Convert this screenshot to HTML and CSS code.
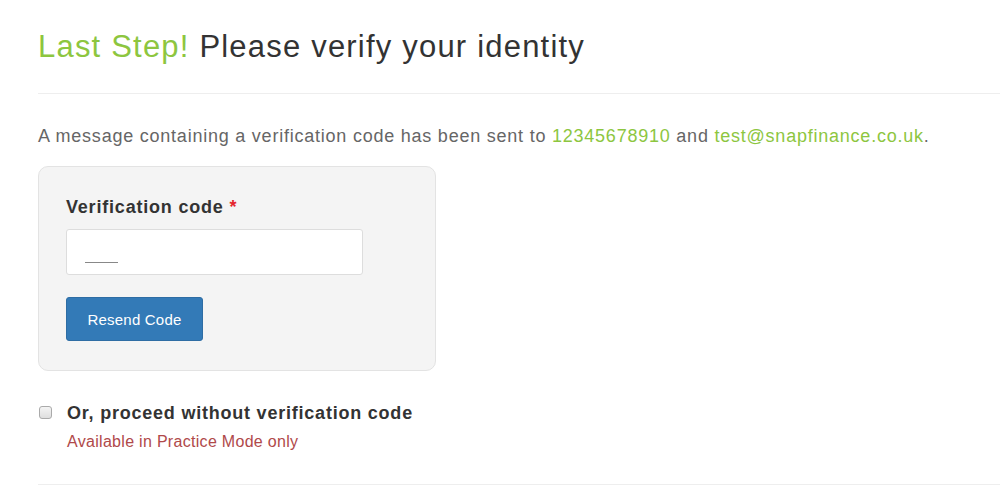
FILE: index.html
```html
<!DOCTYPE html>
<html>
<head>
<meta charset="utf-8">
<link rel="stylesheet" href="styles.css">
</head>
<body>
<div class="page">
  <h1 class="title"><span class="green">Last Step!</span> Please verify your identity</h1>
  <hr class="rule">
  <p class="lead">A message containing a verification code has been sent to <span class="green">12345678910</span> and <span class="green">test@snapfinance.co.uk</span>.</p>
  <div class="well">
    <label class="label">Verification code <span class="req">*</span></label>
    <div class="input"><span class="placeholder"></span></div>
    <button class="btn">Resend Code</button>
  </div>
  <div class="check-row">
    <span class="checkbox"></span>
    <div class="check-text">
      <div class="check-label">Or, proceed without verification code</div>
      <div class="note">Available in Practice Mode only</div>
    </div>
  </div>
  <hr class="rule bottom">
</div>
</body>
</html>
```
FILE: styles.css
```css
html, body {
  margin: 0;
  padding: 0;
  background: #fff;
}
body {
  font-family: "Liberation Sans", Arial, sans-serif;
  color: #333;
}
.page {
  padding: 28px 0 0 38px;
}
.title {
  margin: 0;
  font-size: 31px;
  font-weight: normal;
  line-height: 38px;
  letter-spacing: 1.2px;
  color: #333;
}
.green {
  color: #8dc63f;
}
.rule {
  border: 0;
  border-top: 1px solid #eee;
  margin: 27px 0 0 0;
}
.lead {
  margin: 30px 0 0 0;
  font-size: 18px;
  line-height: 24px;
  letter-spacing: 0.77px;
  color: #666;
}
.well {
  margin-top: 18px;
  width: 398px;
  box-sizing: border-box;
  background: #f4f4f4;
  border: 1px solid #e3e3e3;
  border-radius: 10px;
  padding: 28px 27px 29px 27px;
}
.label {
  display: block;
  font-size: 18px;
  font-weight: bold;
  line-height: 24px;
  letter-spacing: 0.8px;
  color: #333;
}
.req {
  color: #e4252c;
}
.input {
  margin-top: 10px;
  width: 297px;
  height: 46px;
  box-sizing: border-box;
  background: #fff;
  border: 1px solid #ddd;
  border-radius: 3px;
  position: relative;
}
.placeholder {
  position: absolute;
  left: 18px;
  top: 32px;
  width: 33px;
  border-top: 1px solid #888;
}
.btn {
  display: block;
  margin-top: 22px;
  width: 137px;
  height: 44px;
  background: #337ab7;
  border: 1px solid #2e6da4;
  border-radius: 3px;
  color: #fff;
  font-family: "Liberation Sans", Arial, sans-serif;
  font-size: 15px;
  letter-spacing: 0.2px;
  padding: 0;
}
.check-row {
  display: flex;
  margin-top: 30px;
}
.checkbox {
  width: 13px;
  height: 13px;
  box-sizing: border-box;
  border: 1px solid #aaa;
  border-radius: 3px;
  background: linear-gradient(#f4f4f4, #dedede);
  margin: 5px 15px 0 1px;
  flex: none;
}
.check-label {
  font-size: 18px;
  font-weight: bold;
  line-height: 24px;
  letter-spacing: 0.78px;
  color: #333;
}
.note {
  margin-top: 7px;
  font-size: 16px;
  line-height: 20px;
  letter-spacing: 0.3px;
  color: #b0494a;
}
.bottom {
  margin-top: 32px;
}
```
